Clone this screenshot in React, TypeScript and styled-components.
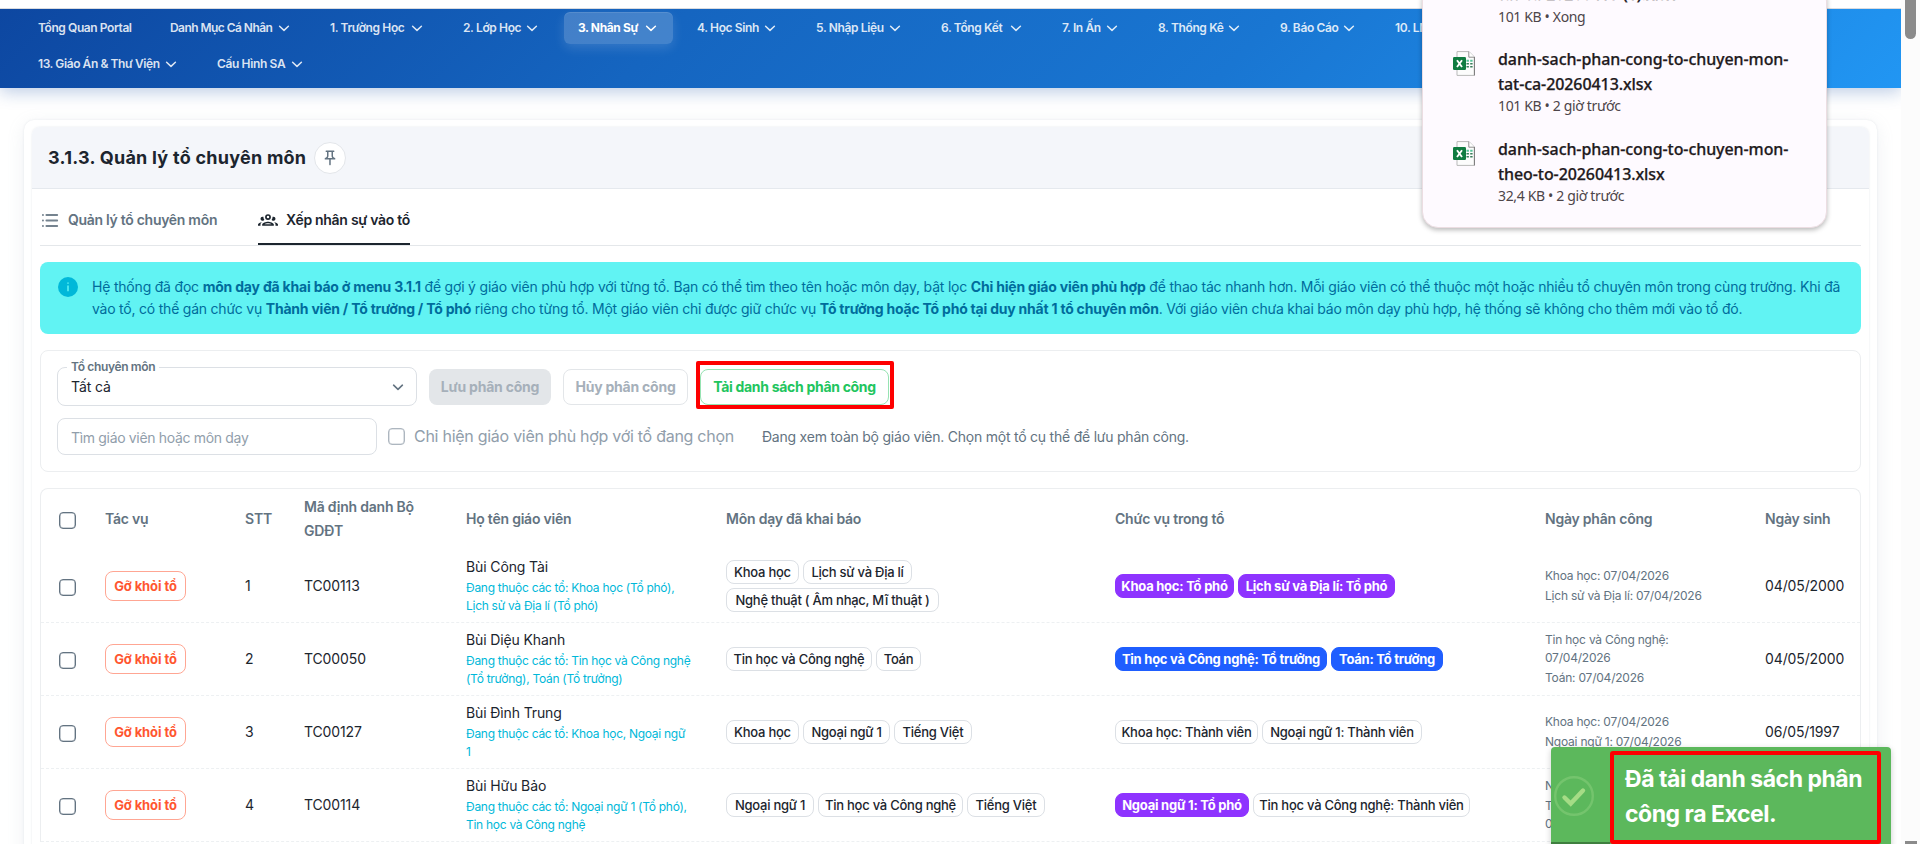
import React from 'react';
import styled, { createGlobalStyle, css } from 'styled-components';

const Global = createGlobalStyle`
  *, *::before, *::after { box-sizing: border-box; }
  html, body { margin: 0; height: 844px; overflow: hidden; background: #fff; }
  body { font-family: Inter, "Noto Sans", sans-serif; color: #1c252e; font-size: 14px; }
  button { font-family: inherit; cursor: pointer; }
  svg { flex: none; }
`;

const Viewport = styled.div`
  position: relative;
  display: flex;
  width: 1920px;
  height: 844px;
  overflow: hidden;
`;
const Page = styled.div`
  width: 1901px;
  flex: none;
  padding-top: 8px;
`;
const ScrollTrack = styled.div`
  width: 19px;
  background: #fcfcfc;
  display: flex;
  flex-direction: column;
  justify-content: space-between;
  align-items: center;
  overflow: hidden;
`;
const Thumb = styled.div`
  width: 11px;
  height: 39px;
  border-radius: 0 0 6px 6px;
  background: #8b8b8b;
`;
const ScrollArrow = styled.div`
  width: 12px;
  height: 3px;
  background: #8b8b8b;
`;

const Header = styled.header`
  border-top: 1px solid #d9dbe0;
  height: 80px;
  padding: 3px 24px 0;
  background: linear-gradient(135deg, #0d47a1 0%, #1565c0 35%, #1976d2 65%, #2196f3 100%);
  background-origin: border-box;
  box-shadow: 0 4px 16px rgba(13, 71, 161, 0.28);
  clip-path: inset(0 0 -30px 0);
  display: flex;
  flex-direction: column;
  gap: 4px;
`;
const NavRow = styled.nav`
  display: flex;
  gap: 10px;
`;
const NavItem = styled.a<{ $active?: boolean }>`
  height: 32px;
  padding: 0 14px;
  display: flex;
  align-items: center;
  gap: 4px;
  border-radius: 6px;
  white-space: nowrap;
  font-size: 12px;
  font-weight: ${(p) => (p.$active ? 700 : 600)};
  color: ${(p) => (p.$active ? '#fff' : 'rgba(255,255,255,0.86)')};
  ${(p) =>
    p.$active &&
    css`
      background: rgba(255, 255, 255, 0.2);
      box-shadow: 0 4px 12px rgba(255, 255, 255, 0.14), inset 0 1px 0 rgba(255, 255, 255, 0.1);
    `}
`;
const NavLabel = styled.span<{ $w: number; $ls?: number }>`
  width: ${(p) => p.$w}px;
  padding-bottom: 1px;
  letter-spacing: ${(p) => p.$ls ?? -0.37}px;
`;

const Outer = styled.section`
  margin: 32px 24px 0;
  padding: 7px 8px 0;
  height: 760px;
  border-radius: 10px;
  box-shadow: 0 0 2px rgba(145, 158, 171, 0.22), 0 4px 18px rgba(145, 158, 171, 0.14);
`;
const Card = styled.div`
  height: 753px;
  border-radius: 8px 8px 0 0;
  box-shadow: 0 0 2px rgba(145, 158, 171, 0.25);
`;
const TitleBar = styled.div`
  height: 62px;
  display: flex;
  align-items: center;
  gap: 8px;
  padding-left: 16px;
  background: #f4f6fa;
  border-bottom: 1px solid #e5e9ee;
  border-radius: 8px 8px 0 0;
`;
const Title = styled.h1`
  margin: 0;
  width: 258px;
  white-space: nowrap;
  font-size: 18px;
  font-weight: 700;
  letter-spacing: 0.25px;
`;
const PinButton = styled.button`
  width: 32px;
  height: 32px;
  border-radius: 50%;
  border: 1px solid #e3e6ea;
  background: #fff;
  color: #637381;
  display: grid;
  place-items: center;
  padding: 0;
`;
const Body = styled.div`
  padding: 8px 8px 0;
  display: flex;
  flex-direction: column;
`;
const Tabs = styled.div`
  height: 49px;
  display: flex;
  gap: 41px;
  border-bottom: 1px solid #e4e7ea;
`;
const Tab = styled.div<{ $active?: boolean }>`
  display: flex;
  align-items: center;
  gap: 8px;
  height: 48px;
  padding-bottom: 1px;
  white-space: nowrap;
  font-weight: 600;
  color: ${(p) => (p.$active ? '#1c252e' : '#637381')};
  border-bottom: 2px solid ${(p) => (p.$active ? '#1c252e' : 'transparent')};
`;
const TabLabel = styled.span<{ $w: number }>`
  width: ${(p) => p.$w}px;
  letter-spacing: -0.29px;
`;

const Alert = styled.div`
  margin-top: 16px;
  height: 72px;
  border-radius: 8px;
  background: #61f3f3;
  color: #006c9c;
  padding: 14px 16px 0 18px;
  display: flex;
  gap: 14px;
`;
const AlertText = styled.div`
  line-height: 22px;
  white-space: nowrap;
`;
const AlertLine = styled.div<{ $ls: number }>`
  letter-spacing: ${(p) => p.$ls}px;
`;

const Filters = styled.div`
  margin-top: 16px;
  height: 122px;
  border: 1px solid #eceef0;
  border-radius: 8px;
  padding: 16px 16px 0;
  display: flex;
  flex-direction: column;
  gap: 12px;
`;
const FilterRow = styled.div`
  display: flex;
  align-items: center;
`;
const Select = styled.div`
  position: relative;
  width: 360px;
  height: 39px;
  border: 1px solid #dce0e5;
  border-radius: 8px;
  padding: 0 10px 0 13px;
  display: flex;
  align-items: center;
  justify-content: space-between;
  letter-spacing: -0.1px;
  margin-right: 12px;
  svg { color: #637381; }
`;
const FloatingLabel = styled.span`
  position: absolute;
  top: -9px;
  left: 9px;
  padding: 0 4px;
  background: #fff;
  font-size: 12px;
  line-height: 15px;
  font-weight: 600;
  letter-spacing: -0.35px;
  color: #637381;
  white-space: nowrap;
`;
const Action = styled.button<{ $w: number; $kind: 'solid' | 'muted' | 'green' }>`
  width: ${(p) => p.$w}px;
  height: 36px;
  padding: 0;
  margin-right: 12px;
  border-radius: 8px;
  font-size: 14px;
  font-weight: 700;
  letter-spacing: ${(p) => (p.$kind === 'green' ? -0.3 : -0.22)}px;
  white-space: nowrap;
  background: ${(p) => (p.$kind === 'solid' ? '#e3e6e9' : '#fff')};
  color: ${(p) => (p.$kind === 'green' ? '#22c55e' : '#a6b0ba')};
  border: ${(p) => (p.$kind === 'solid' ? 'none' : `1px solid ${p.$kind === 'green' ? '#96e3b2' : '#e3e6e9'}`)};
`;
const Highlight = styled.span`
  position: absolute;
  left: -4px;
  top: -8px;
  width: 198px;
  height: 48px;
  border: 4px solid #fe0000;
  border-radius: 2px;
  pointer-events: none;
`;
const Marked = styled.div`
  position: relative;
`;
const Search = styled.div`
  width: 320px;
  height: 37px;
  border: 1px solid #dce0e5;
  border-radius: 8px;
  padding: 2px 13px 0;
  display: flex;
  align-items: center;
  color: #919eab;
  letter-spacing: -0.33px;
  margin-right: 11px;
`;
const Check = styled.span<{ $muted?: boolean }>`
  display: block;
  width: 17px;
  height: 17px;
  border: 1px solid ${(p) => (p.$muted ? '#adb6bf' : '#637381')};
  box-shadow: inset 0 0 0 0.6px ${(p) => (p.$muted ? '#c9cfd5' : '#9aa5af')};
  border-radius: 4px;
`;
const CheckLabel = styled.span`
  margin-left: 9px;
  width: 348px;
  font-size: 16px;
  letter-spacing: -0.27px;
  color: #919eab;
  white-space: nowrap;
  padding-bottom: 1px;
`;
const Hint = styled.span`
  color: #637381;
  white-space: nowrap;
  letter-spacing: -0.23px;
`;

const Table = styled.div`
  margin-top: 16px;
  border: 1px solid #eceef0;
  border-bottom: 0;
  border-radius: 8px 8px 0 0;
`;
const Row = styled.div`
  display: grid;
  grid-template-columns: 48px 140px 59px 162px 260px 389px 430px 220px 111px;
  height: 73px;
  align-items: center;
  border-bottom: 1px dashed #edf0f2;
`;
const HeadRow = styled(Row)`
  height: 61px;
  border-bottom: 0;
  color: #637381;
  font-weight: 600;
  line-height: 24px;
`;
const Cell = styled.div`
  padding: 0 0 0 16px;
  white-space: nowrap;
  letter-spacing: -0.12px;
`;
const HeadCell = styled(Cell)`
  padding-bottom: 2px;
  letter-spacing: -0.22px;
`;
const TextCell = styled(Cell)`
  padding-bottom: 1px;
`;
const CheckCell = styled.div`
  padding: 2px 0 0 18px;
`;
const Remove = styled.button`
  width: 81px;
  height: 30px;
  padding: 0;
  display: block;
  border: 1px solid #ffa693;
  border-radius: 8px;
  background: #fff;
  color: #ff5630;
  font-size: 13px;
  font-weight: 700;
  letter-spacing: -0.1px;
`;
const Name = styled.div`
  line-height: 22px;
  margin-top: -1px;
`;
const Sub = styled.div`
  font-size: 12px;
  line-height: 18px;
  margin-top: 1px;
  color: #00b8d9;
  letter-spacing: -0.28px;
`;
const Chips = styled.div`
  display: flex;
  flex-wrap: wrap;
  gap: 4px;
`;
const Chip = styled.span<{ $tone?: string; $w: number }>`
  height: 24px;
  width: ${(p) => p.$w}px;
  display: flex;
  align-items: center;
  justify-content: center;
  padding-bottom: 1px;
  border-radius: 8px;
  font-size: 13px;
  letter-spacing: -0.25px;
  font-weight: ${(p) => (p.$tone ? 700 : 500)};
  color: ${(p) => (p.$tone ? '#fff' : '#1c252e')};
  background: ${(p) => p.$tone ?? '#fff'};
  border: 1px solid ${(p) => p.$tone ?? '#dce0e5'};
`;
const Dates = styled.div`
  display: flex;
  flex-direction: column;
  gap: 2px;
  font-size: 12px;
  line-height: 18px;
  color: #637381;
  letter-spacing: -0.22px;
`;

const Downloads = styled.aside`
  position: absolute;
  left: 1422px;
  top: -15px;
  width: 405px;
  height: 243px;
  border: 1px solid #ecdde2;
  border-radius: 16px;
  background: #fefaff;
  box-shadow: 0 2px 5px rgba(0, 0, 0, 0.28);
  padding: 0 0 0 30px;
  font-family: "Noto Sans", "Open Sans", sans-serif;
`;
const DownloadItem = styled.div`
  height: 90px;
  display: flex;
  gap: 22px;
`;
const FirstItem = styled.div`
  height: 61px;
  margin-left: 45px;
`;
const FileName = styled.div`
  font-size: 16px;
  font-weight: 500;
  line-height: 25px;
  color: #1f1a1d;
  -webkit-text-stroke: 0.25px #1f1a1d;
  white-space: nowrap;
  letter-spacing: -0.08px;
`;
const ClippedName = styled(FileName)`
  line-height: 16px;
  padding-bottom: 6px;
`;
const FileMeta = styled.div`
  font-size: 14px;
  line-height: 18px;
  color: #4d4549;
  letter-spacing: -0.35px;
`;
const IconSlot = styled.div`
  padding-top: 4px;
  width: 23px;
`;

const Toast = styled.div`
  position: absolute;
  left: 1551px;
  top: 747px;
  width: 340px;
  height: 110px;
  border-radius: 4px;
  background: #5cb85c;
  box-shadow: 0 2px 6px rgba(0, 0, 0, 0.2);
  display: flex;
`;
const ToastIcon = styled.div`
  width: 59px;
  padding: 29px 0 0 3px;
`;
const ToastText = styled.div`
  margin-top: 4px;
  width: 271px;
  height: 93px;
  border: 4px solid #fe0000;
  border-radius: 3px;
  padding: 7px 0 0 11px;
  color: #fff;
  font-size: 23px;
  font-weight: 700;
  line-height: 35px;
  white-space: nowrap;
  letter-spacing: -0.47px;
`;
const Progress = styled.div`
  position: absolute;
  left: 0;
  top: 95px;
  width: 59px;
  height: 2px;
  background: #3f7f3f;
`;

const Chevron = ({ size = 16, w = 2 }: { size?: number; w?: number }) => (
  <svg width={size} height={size} viewBox="0 0 16 16" fill="none" stroke="currentColor" strokeWidth={w} strokeLinecap="round" strokeLinejoin="round">
    <path d="M3.6 6.2 8 10.4l4.4-4.2" />
  </svg>
);
const PinIcon = () => (
  <svg width="18" height="18" viewBox="0 0 24 24" fill="currentColor">
    <path d="M14 4v5c0 1.12.37 2.16 1 3H9c.65-.86 1-1.9 1-3V4zm3-2H7c-.55 0-1 .45-1 1s.45 1 1 1h1v5c0 1.66-1.34 3-3 3v2h5.97v7l1 1 1-1v-7H19v-2c-1.66 0-3-1.34-3-3V4h1c.55 0 1-.45 1-1s-.45-1-1-1" />
  </svg>
);
const ListIcon = () => (
  <svg width="20" height="20" viewBox="0 0 20 20" fill="none" stroke="#75838f" strokeWidth="1.9" strokeLinecap="round">
    <path d="M6.4 5H17.2M6.4 10.5H17.2M6.4 16H17.2M2.9 5h.1M2.9 10.5h.1M2.9 16h.1" />
  </svg>
);
const GroupsIcon = () => (
  <svg width="20" height="20" viewBox="0 0 24 24" fill="currentColor">
    <path d="M12 5a3.5 3.5 0 0 0-3.5 3.5A3.5 3.5 0 0 0 12 12a3.5 3.5 0 0 0 3.5-3.5A3.5 3.5 0 0 0 12 5m0 2a1.5 1.5 0 0 1 1.5 1.5A1.5 1.5 0 0 1 12 10a1.5 1.5 0 0 1-1.5-1.5A1.5 1.5 0 0 1 12 7M5.5 8A2.5 2.5 0 0 0 3 10.5c0 .94.53 1.75 1.29 2.18.36.2.77.32 1.21.32s.85-.12 1.21-.32c.37-.21.68-.51.91-.87A5.42 5.42 0 0 1 6.5 8.5v-.28c-.3-.14-.64-.22-1-.22m13 0c-.36 0-.7.08-1 .22v.28c0 1.2-.39 2.36-1.12 3.31.12.19.25.34.4.49a2.48 2.48 0 0 0 1.72.7c.44 0 .85-.12 1.21-.32.76-.43 1.29-1.24 1.29-2.18A2.5 2.5 0 0 0 18.5 8M12 14c-2.34 0-7 1.17-7 3.5V19h14v-1.5c0-2.33-4.66-3.5-7-3.5m-7.29.55C2.78 14.78 0 15.76 0 17.5V19h3v-1.93c0-1.01.69-1.85 1.71-2.52m14.58 0c1.02.67 1.71 1.51 1.71 2.52V19h3v-1.5c0-1.74-2.78-2.72-4.71-2.95M12 16c1.53 0 3.24.5 4.23 1H7.77c.99-.5 2.7-1 4.23-1" />
  </svg>
);
const InfoIcon = () => (
  <svg width="20" height="22" viewBox="0 0 20 22">
    <circle cx="10" cy="11" r="10" fill="#00b8d9" />
    <path d="M10 9.6v5.6M10 6.4v1.4" stroke="#61f3f3" strokeWidth="1.5" />
  </svg>
);
const ExcelIcon = () => (
  <svg width="23" height="25" viewBox="0 0 23 25">
    <path d="M4 .6h12L21.4 6v18.4H4z" fill="#fcfcfc" stroke="#b9b9b9" />
    <path d="M15.8.6V6.2h5.6" fill="#fff" stroke="#8f8f8f" />
    <path d="M21.4 6v18.4" stroke="#777" />
    <path d="M13.5 9.8h2.4M17.2 9.8h2.4" stroke="#58c39a" strokeWidth="2" />
    <path d="M13.5 12.8h2.4M17.2 12.8h2.4M13.5 15.8h2.4M17.2 15.8h2.4" stroke="#3b7d5c" strokeWidth="1.6" />
    <rect x="0" y="6" width="13" height="13" rx="1.2" fill="#107c41" />
    <path d="M4 9.2l5 6.8M9 9.2l-5 6.8" stroke="#fff" strokeWidth="1.9" />
  </svg>
);
const ToastCheck = () => (
  <svg width="40" height="40" viewBox="0 0 40 40" fill="none">
    <circle cx="20" cy="20" r="18.8" stroke="#74c46d" strokeWidth="2.4" />
    <path d="M10.5 21.5l6.2 6L29 14.5" stroke="#a5dc86" strokeWidth="4.4" strokeLinecap="round" />
  </svg>
);

type NavDef = { label: string; w: number; ls?: number; plain?: boolean; active?: boolean };
const NAV: NavDef[] = [
  { label: 'Tổng Quan Portal', w: 94, plain: true, ls: -0.42 },
  { label: 'Danh Mục Cá Nhân', w: 102, ls: -0.55 },
  { label: '1. Trường Học', w: 75 },
  { label: '2. Lớp Học', w: 57 },
  { label: '3. Nhân Sự', w: 61, active: true },
  { label: '4. Học Sinh', w: 61 },
  { label: '5. Nhập Liệu', w: 67 },
  { label: '6. Tổng Kết', w: 63 },
  { label: '7. In Ấn', w: 38 },
  { label: '8. Thống Kê', w: 64 },
  { label: '9. Báo Cáo', w: 57 },
  { label: '10. LMS', w: 44 },
];
const NAV2: NavDef[] = [
  { label: '13. Giáo Án & Thư Viện', w: 121, ls: -0.42 },
  { label: 'Cấu Hình SA', w: 68 },
];

const PURPLE = '#8e33ff';
const BLUE = '#1f5eff';
type ChipDef = [string, number, string?];
type Teacher = { code: string; name: string; sub: string[]; subjects: ChipDef[]; roles: ChipDef[]; dates: string[][]; dob: string };
const TEACHERS: Teacher[] = [
  {
    code: 'TC00113', name: 'Bùi Công Tài', sub: ['Đang thuộc các tổ: Khoa học (Tổ phó),', 'Lịch sử và Địa lí (Tổ phó)'],
    subjects: [['Khoa học', 73], ['Lịch sử và Địa lí', 109], ['Nghệ thuật ( Âm nhạc, Mĩ thuật )', 213]],
    roles: [['Khoa học: Tổ phó', 119, PURPLE], ['Lịch sử và Địa lí: Tổ phó', 157, PURPLE]],
    dates: [['Khoa học: 07/04/2026'], ['Lịch sử và Địa lí: 07/04/2026']], dob: '04/05/2000',
  },
  {
    code: 'TC00050', name: 'Bùi Diệu Khanh', sub: ['Đang thuộc các tổ: Tin học và Công nghệ', '(Tổ trưởng), Toán (Tổ trưởng)'],
    subjects: [['Tin học và Công nghệ', 146], ['Toán', 45]],
    roles: [['Tin học và Công nghệ: Tổ trưởng', 212, BLUE], ['Toán: Tổ trưởng', 112, BLUE]],
    dates: [['Tin học và Công nghệ:', '07/04/2026'], ['Toán: 07/04/2026']], dob: '04/05/2000',
  },
  {
    code: 'TC00127', name: 'Bùi Đình Trung', sub: ['Đang thuộc các tổ: Khoa học, Ngoại ngữ', '1'],
    subjects: [['Khoa học', 73], ['Ngoại ngữ 1', 87], ['Tiếng Việt', 78]],
    roles: [['Khoa học: Thành viên', 143], ['Ngoại ngữ 1: Thành viên', 160]],
    dates: [['Khoa học: 07/04/2026'], ['Ngoại ngữ 1: 07/04/2026']], dob: '06/05/1997',
  },
  {
    code: 'TC00114', name: 'Bùi Hữu Bảo', sub: ['Đang thuộc các tổ: Ngoại ngữ 1 (Tổ phó),', 'Tin học và Công nghệ'],
    subjects: [['Ngoại ngữ 1', 88], ['Tin học và Công nghệ', 145], ['Tiếng Việt', 78]],
    roles: [['Ngoại ngữ 1: Tổ phó', 134, PURPLE], ['Tin học và Công nghệ: Thành viên', 217]],
    dates: [['Ngoại ngữ 1: 07/04/2026'], ['Tin học và Công nghệ:', '07/04/2026']], dob: '',
  },
];

const Nav = ({ items }: { items: NavDef[] }) => (
  <NavRow>
    {items.map((n) => (
      <NavItem key={n.label} $active={n.active}>
        <NavLabel $w={n.w} $ls={n.ls}>{n.label}</NavLabel>
        {!n.plain && <Chevron w={1.5} />}
      </NavItem>
    ))}
  </NavRow>
);
const ChipList = ({ items }: { items: ChipDef[] }) => (
  <Chips>
    {items.map(([t, w, tone]) => (
      <Chip key={t} $w={w} $tone={tone}>{t}</Chip>
    ))}
  </Chips>
);

export default function App() {
  return (
    <Viewport>
      <Global />
      <Page>
        <Header>
          <Nav items={NAV} />
          <Nav items={NAV2} />
        </Header>
        <Outer>
          <Card>
            <TitleBar>
              <Title>3.1.3. Quản lý tổ chuyên môn</Title>
              <PinButton><PinIcon /></PinButton>
            </TitleBar>
            <Body>
              <Tabs>
                <Tab><ListIcon /><TabLabel $w={149}>Quản lý tổ chuyên môn</TabLabel></Tab>
                <Tab $active><GroupsIcon /><TabLabel $w={124}>Xếp nhân sự vào tổ</TabLabel></Tab>
              </Tabs>
              <Alert>
                <InfoIcon />
                <AlertText>
                  <AlertLine $ls={-0.2}>
                    Hệ thống đã đọc <b>môn dạy đã khai báo ở menu 3.1.1</b> để gợi ý giáo viên phù hợp với từng tổ. Bạn có thể tìm theo tên hoặc môn dạy, bật lọc <b>Chỉ hiện giáo viên phù hợp</b> để thao tác nhanh hơn. Mỗi giáo viên có thể thuộc một hoặc nhiều tổ chuyên môn trong cùng trường. Khi đã
                  </AlertLine>
                  <AlertLine $ls={-0.22}>
                    vào tổ, có thể gán chức vụ <b>Thành viên / Tổ trưởng / Tổ phó</b> riêng cho từng tổ. Một giáo viên chỉ được giữ chức vụ <b>Tổ trưởng hoặc Tổ phó tại duy nhất 1 tổ chuyên môn</b>. Với giáo viên chưa khai báo môn dạy phù hợp, hệ thống sẽ không cho thêm mới vào tổ đó.
                  </AlertLine>
                </AlertText>
              </Alert>
              <Filters>
                <FilterRow>
                  <Select>
                    <FloatingLabel>Tổ chuyên môn</FloatingLabel>
                    Tất cả
                    <Chevron w={1.6} />
                  </Select>
                  <Action $kind="solid" $w={122}>Lưu phân công</Action>
                  <Action $kind="muted" $w={125}>Hủy phân công</Action>
                  <Marked>
                    <Action $kind="green" $w={189}>Tải danh sách phân công</Action>
                    <Highlight />
                  </Marked>
                </FilterRow>
                <FilterRow>
                  <Search>Tìm giáo viên hoặc môn dạy</Search>
                  <Check $muted />
                  <CheckLabel>Chỉ hiện giáo viên phù hợp với tổ đang chọn</CheckLabel>
                  <Hint>Đang xem toàn bộ giáo viên. Chọn một tổ cụ thể để lưu phân công.</Hint>
                </FilterRow>
              </Filters>
              <Table>
                <HeadRow>
                  <CheckCell><Check /></CheckCell>
                  <HeadCell>Tác vụ</HeadCell>
                  <HeadCell>STT</HeadCell>
                  <HeadCell>Mã định danh Bộ<br />GDĐT</HeadCell>
                  <HeadCell>Họ tên giáo viên</HeadCell>
                  <HeadCell>Môn dạy đã khai báo</HeadCell>
                  <HeadCell>Chức vụ trong tổ</HeadCell>
                  <HeadCell>Ngày phân công</HeadCell>
                  <HeadCell>Ngày sinh</HeadCell>
                </HeadRow>
                {TEACHERS.map((t, i) => (
                  <Row key={t.code}>
                    <CheckCell><Check /></CheckCell>
                    <Cell><Remove>Gỡ khỏi tổ</Remove></Cell>
                    <TextCell>{i + 1}</TextCell>
                    <TextCell>{t.code}</TextCell>
                    <Cell>
                      <Name>{t.name}</Name>
                      <Sub>{t.sub[0]}<br />{t.sub[1]}</Sub>
                    </Cell>
                    <Cell><ChipList items={t.subjects} /></Cell>
                    <Cell><ChipList items={t.roles} /></Cell>
                    <TextCell>
                      <Dates>
                        {t.dates.map((d) => (
                          <div key={d[0]}>{d[0]}{d[1] && <><br />{d[1]}</>}</div>
                        ))}
                      </Dates>
                    </TextCell>
                    <TextCell>{t.dob}</TextCell>
                  </Row>
                ))}
              </Table>
            </Body>
          </Card>
        </Outer>
      </Page>
      <ScrollTrack><Thumb /><ScrollArrow /></ScrollTrack>
      <Downloads>
        <FirstItem>
          <ClippedName>tat-ca-20260413 (1).xlsx</ClippedName>
          <FileMeta>101 KB • Xong</FileMeta>
        </FirstItem>
        <DownloadItem>
          <IconSlot><ExcelIcon /></IconSlot>
          <div>
            <FileName>danh-sach-phan-cong-to-chuyen-mon-<br />tat-ca-20260413.xlsx</FileName>
            <FileMeta>101 KB • 2 giờ trước</FileMeta>
          </div>
        </DownloadItem>
        <DownloadItem>
          <IconSlot><ExcelIcon /></IconSlot>
          <div>
            <FileName>danh-sach-phan-cong-to-chuyen-mon-<br />theo-to-20260413.xlsx</FileName>
            <FileMeta>32,4 KB • 2 giờ trước</FileMeta>
          </div>
        </DownloadItem>
      </Downloads>
      <Toast>
        <ToastIcon><ToastCheck /></ToastIcon>
        <ToastText>Đã tải danh sách phân<br />công ra Excel.</ToastText>
        <Progress />
      </Toast>
    </Viewport>
  );
}
